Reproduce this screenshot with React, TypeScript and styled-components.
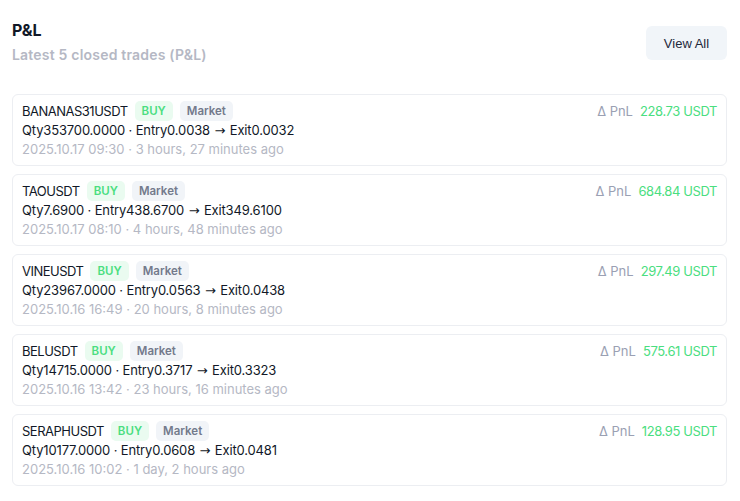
import React from "react";
import styled, { createGlobalStyle } from "styled-components";

const Global = createGlobalStyle`
  html, body { margin: 0; padding: 0; background: #ffffff; }
  body { font-family: Inter, "Open Sans", sans-serif; }
`;

const Page = styled.div`
  padding: 18px 13px 12px 12px;
`;

const Header = styled.div`
  display: flex;
  justify-content: space-between;
  align-items: flex-start;
`;

const TitleBlock = styled.div`
  display: flex;
  flex-direction: column;
`;

const Title = styled.h2`
  margin: 0;
  font-size: 16px;
  line-height: 24px;
  font-weight: 700;
  color: #111827;
`;

const Subtitle = styled.p`
  margin: 2px 0 0;
  font-size: 14px;
  line-height: 22px;
  font-weight: 600;
  letter-spacing: 0.2px;
  color: #b5b8c4;
`;

const ViewAll = styled.button`
  margin-top: 8px;
  width: 81px;
  height: 34px;
  border: none;
  border-radius: 6px;
  background: #f1f5f9;
  color: #1e293b;
  font-family: "Liberation Sans", Arial, sans-serif;
  font-size: 13px;
  font-weight: 500;
  cursor: pointer;
`;

const List = styled.div`
  margin-top: 28px;
  display: flex;
  flex-direction: column;
  gap: 8px;
`;

const Card = styled.div`
  display: flex;
  justify-content: space-between;
  align-items: flex-start;
  border: 1px solid #eceef2;
  border-radius: 6px;
  padding: 6px 9px 5px 9px;
  height: 72px;
  box-sizing: border-box;
`;

const Left = styled.div`
  display: flex;
  flex-direction: column;
`;

const TopRow = styled.div`
  display: flex;
  align-items: center;
  gap: 7px;
  height: 20px;
`;

const Symbol = styled.span`
  font-size: 13px;
  letter-spacing: -0.5px;
  color: #111827;
`;

const Badge = styled.span<{ $tone: "green" | "gray" }>`
  display: inline-flex;
  align-items: center;
  height: 20px;
  padding: 0 7px;
  border-radius: 5px;
  font-size: 11.5px;
  font-weight: 600;
  background: ${(p) => (p.$tone === "green" ? "#eafbf0" : "#f1f4f8")};
  color: ${(p) => (p.$tone === "green" ? "#4ade80" : "#737a8c")};
`;

const Detail = styled.div`
  font-size: 13px;
  line-height: 19px;
  letter-spacing: -0.15px;
  color: #111827;
`;

const Arrow = styled.span`
  font-family: "DejaVu Sans", sans-serif;
  font-size: 13px;
  margin: 0 1px;
`;

const Meta = styled.div`
  font-size: 13px;
  line-height: 19px;
  color: #b5b8c4;
`;

const Right = styled.div`
  display: flex;
  align-items: center;
  gap: 7px;
  height: 20px;
  font-size: 13px;
`;

const PnlLabel = styled.span`
  color: #9aa0b3;
`;

const PnlValue = styled.span`
  color: #4ade80;
  letter-spacing: -0.4px;
`;

const trades = [
  { sym: "BANANAS31USDT", qty: "353700.0000", entry: "0.0038", exit: "0.0032", time: "2025.10.17 09:30", ago: "3 hours, 27 minutes ago", pnl: "228.73" },
  { sym: "TAOUSDT", qty: "7.6900", entry: "438.6700", exit: "349.6100", time: "2025.10.17 08:10", ago: "4 hours, 48 minutes ago", pnl: "684.84" },
  { sym: "VINEUSDT", qty: "23967.0000", entry: "0.0563", exit: "0.0438", time: "2025.10.16 16:49", ago: "20 hours, 8 minutes ago", pnl: "297.49" },
  { sym: "BELUSDT", qty: "14715.0000", entry: "0.3717", exit: "0.3323", time: "2025.10.16 13:42", ago: "23 hours, 16 minutes ago", pnl: "575.61" },
  { sym: "SERAPHUSDT", qty: "10177.0000", entry: "0.0608", exit: "0.0481", time: "2025.10.16 10:02", ago: "1 day, 2 hours ago", pnl: "128.95" },
];

export default function App() {
  return (
    <>
      <Global />
      <Page>
        <Header>
          <TitleBlock>
            <Title>P&amp;L</Title>
            <Subtitle>Latest 5 closed trades (P&amp;L)</Subtitle>
          </TitleBlock>
          <ViewAll>View All</ViewAll>
        </Header>
        <List>
          {trades.map((t) => (
            <Card key={t.sym}>
              <Left>
                <TopRow>
                  <Symbol>{t.sym}</Symbol>
                  <Badge $tone="green">BUY</Badge>
                  <Badge $tone="gray">Market</Badge>
                </TopRow>
                <Detail>
                  Qty{t.qty} · Entry{t.entry} <Arrow>→</Arrow> Exit{t.exit}
                </Detail>
                <Meta>
                  {t.time} · {t.ago}
                </Meta>
              </Left>
              <Right>
                <PnlLabel>Δ PnL</PnlLabel>
                <PnlValue>{t.pnl} USDT</PnlValue>
              </Right>
            </Card>
          ))}
        </List>
      </Page>
    </>
  );
}
